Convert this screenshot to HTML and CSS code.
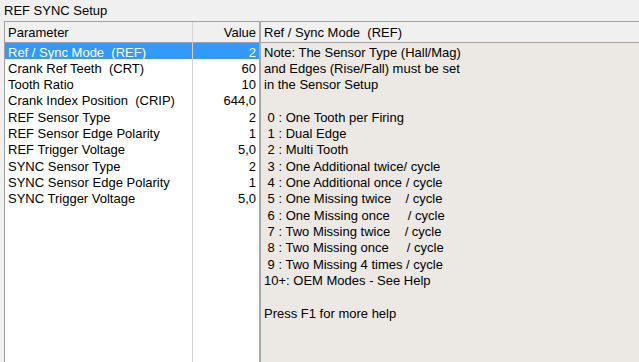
FILE: index.html
```html
<!DOCTYPE html>
<html>
<head>
<meta charset="utf-8">
<link rel="stylesheet" href="styles.css">
</head>
<body>
<div class="title">REF SYNC Setup</div>
<div class="panel">
  <div class="col col-param">
    <div class="head">Parameter</div>
    <div class="body">
      <div class="row sel">Ref / Sync Mode&nbsp; (REF)</div>
      <div class="row">Crank Ref Teeth&nbsp; (CRT)</div>
      <div class="row">Tooth Ratio</div>
      <div class="row">Crank Index Position&nbsp; (CRIP)</div>
      <div class="row">REF Sensor Type</div>
      <div class="row">REF Sensor Edge Polarity</div>
      <div class="row">REF Trigger Voltage</div>
      <div class="row">SYNC Sensor Type</div>
      <div class="row">SYNC Sensor Edge Polarity</div>
      <div class="row">SYNC Trigger Voltage</div>
    </div>
  </div>
  <div class="col col-value">
    <div class="head right">Value</div>
    <div class="body">
      <div class="row right sel">2</div>
      <div class="row right">60</div>
      <div class="row right">10</div>
      <div class="row right">644,0</div>
      <div class="row right">2</div>
      <div class="row right">1</div>
      <div class="row right">5,0</div>
      <div class="row right">2</div>
      <div class="row right">1</div>
      <div class="row right">5,0</div>
    </div>
  </div>
  <div class="col col-notes">
    <div class="head">Ref / Sync Mode&nbsp; (REF)</div>
    <div class="body notes">
      <div class="row">Note: The Sensor Type (Hall/Mag)</div>
      <div class="row">and Edges (Rise/Fall) must be set</div>
      <div class="row">in the Sensor Setup</div>
      <div class="row"></div>
      <div class="row">&nbsp;0 : One Tooth per Firing</div>
      <div class="row">&nbsp;1 : Dual Edge</div>
      <div class="row">&nbsp;2 : Multi Tooth</div>
      <div class="row">&nbsp;3 : One Additional twice/ cycle</div>
      <div class="row">&nbsp;4 : One Additional once / cycle</div>
      <div class="row">&nbsp;5 : One Missing twice&nbsp;&nbsp;&nbsp; / cycle</div>
      <div class="row">&nbsp;6 : One Missing once&nbsp;&nbsp;&nbsp;&nbsp; / cycle</div>
      <div class="row">&nbsp;7 : Two Missing twice&nbsp;&nbsp;&nbsp; / cycle</div>
      <div class="row">&nbsp;8 : Two Missing once&nbsp;&nbsp;&nbsp;&nbsp; / cycle</div>
      <div class="row">&nbsp;9 : Two Missing 4 times / cycle</div>
      <div class="row">10+: OEM Modes - See Help</div>
      <div class="row"></div>
      <div class="row">Press F1 for more help</div>
    </div>
  </div>
</div>
</body>
</html>
```
FILE: styles.css
```css
html, body {
  margin: 0;
  padding: 0;
  height: 100%;
}
body {
  background: #f0f0f0;
  font-family: "Liberation Sans", Arial, sans-serif;
  font-size: 13px;
  color: #000;
  overflow: hidden;
  display: flex;
  flex-direction: column;
}
.title {
  height: 21px;
  line-height: 21px;
  padding-left: 4px;
  flex: none;
}
.panel {
  flex: 1;
  margin-left: 4px;
  border-left: 1px solid #a0a0a0;
  border-top: 1px solid #a0a0a0;
  display: flex;
  min-height: 0;
}
.col {
  display: flex;
  flex-direction: column;
}
.col-param {
  width: 187px;
  border-right: 1px solid #d0d0d0;
  background: #fff;
}
.col-value {
  width: 66px;
  border-right: 2px solid #a8a8a8;
  background: #fff;
}
.col-notes {
  flex: 1;
  background: #ece9e4;
}
.head {
  height: 20px;
  line-height: 21px;
  padding: 0 3px;
  background: #f0f0f0;
  border-bottom: 1px solid #a0a0a0;
  white-space: nowrap;
  overflow: hidden;
}
.col-param .head {
  border-right: 1px solid #d8d8d8;
  margin-right: -1px;
}
.body {
  flex: 1;
}
.row {
  box-sizing: border-box;
  height: 16.33px;
  line-height: 16px;
  padding: 1.5px 3px 0;
  white-space: pre;
}
.right {
  text-align: right;
}
.sel {
  background: #3399ff;
  color: #fff;
}
```
